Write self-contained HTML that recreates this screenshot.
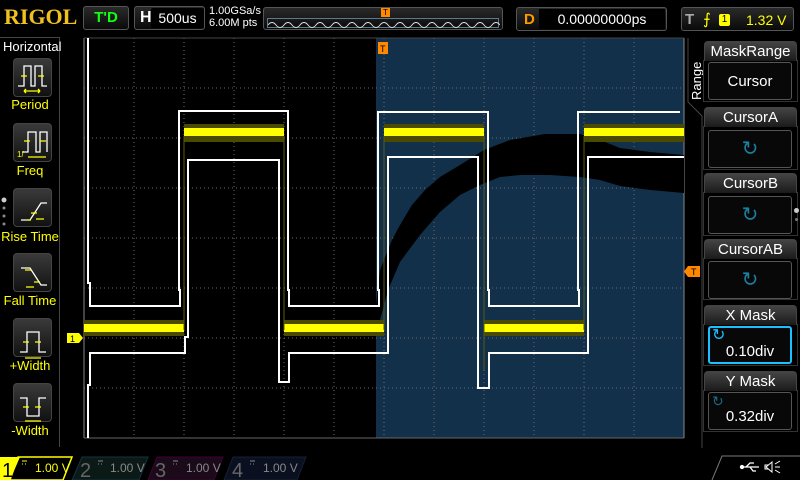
<!DOCTYPE html>
<html><head><meta charset="utf-8"><style>
*{margin:0;padding:0;box-sizing:border-box}
body{width:800px;height:480px;background:#000;position:relative;overflow:hidden;font-family:"Liberation Sans",sans-serif;color:#fff}
.a{position:absolute}
.box{position:absolute;border:1px solid #555;border-radius:3px;background:linear-gradient(#2a2a2a,#0a0a0a)}
.lb{position:absolute;color:#ff0;font-size:13px;text-align:center;width:60px;left:0}
.btn{position:absolute;left:13px;width:39px;height:39px;border:1px solid #444;border-radius:4px;background:linear-gradient(#3a3a3a,#111)}
.rh{position:absolute;left:704px;width:93px;height:20px;border:1px solid #444;border-bottom:none;border-radius:4px 4px 0 0;background:linear-gradient(#444,#1a1a1a);font-size:15px;text-align:center;line-height:19px}
.rb{position:absolute;left:708px;width:84px;height:38px;border:1px solid #555;border-radius:3px;background:#080808;font-size:15px;text-align:center}
.rw{position:absolute;left:703px;width:95px;border:1px solid #333;border-top:none}
</style></head><body>
<div class="a" style="left:4px;top:4px;font-family:'Liberation Serif',serif;font-weight:bold;font-size:22px;color:#f0c020">RIGOL</div>
<div class="box" style="left:83px;top:6px;width:46px;height:24px;color:#1f1;font-weight:bold;font-size:15px;text-align:center;line-height:22px">T'D</div>
<div class="box" style="left:134px;top:6px;width:71px;height:24px"><span class="a" style="left:5px;top:2px;font-weight:bold;font-size:16px">H</span><div class="a" style="left:16px;top:1px;width:53px;height:20px;background:#000;border-radius:2px;font-size:14px;text-align:center;line-height:20px">500us</div></div>
<div class="a" style="left:209px;top:5px;font-size:11px;line-height:12px">1.00GSa/s<br>6.00M pts</div>
<div class="box" style="left:263px;top:7px;width:240px;height:23px"><div class="a" style="left:3px;top:10px;width:232px;height:10px;border:1px solid #5a7a90"></div>
<svg class="a" style="left:4px;top:11px" width="232" height="9"><path d="M0 6 q4 -5 8 0 t8 0 t8 0 t8 0 t8 0 t8 0 t8 0 t8 0 t8 0 t8 0 t8 0 t8 0 t8 0 t8 0 t8 0 t8 0 t8 0 t8 0 t8 0 t8 0 t8 0 t8 0 t8 0 t8 0 t8 0 t8 0 t8 0 t8 0 t8 0" stroke="#ddd" fill="none"/></svg>
<div class="a" style="left:117px;top:0px;width:9px;height:9px;background:#f80;color:#000;font-size:8px;text-align:center;line-height:9px">T</div></div>
<div class="box" style="left:516px;top:7px;width:151px;height:24px"><span class="a" style="left:7px;top:3px;color:#f90;font-weight:bold;font-size:15px">D</span><div class="a" style="left:22px;top:1px;width:126px;height:20px;background:#000;font-size:14px;text-align:center;line-height:20px">0.00000000ps</div></div>
<div class="box" style="left:681px;top:7px;width:113px;height:24px"><span class="a" style="left:3px;top:3px;color:#aaa;font-weight:bold;font-size:15px">T</span><span class="a" style="left:21px;top:2px;color:#ff0;font-size:15px">⨍</span><div class="a" style="left:37px;top:6px;width:11px;height:12px;background:#ff0;color:#000;font-size:10px;text-align:center;border-radius:2px;line-height:12px">1</div><span class="a" style="left:64px;top:4px;color:#ff0;font-size:14px">1.32 V</span></div>

<div class="a" style="left:0;top:37px;width:60px;height:410px;border-right:1px solid #444;border-top:1px solid #444"></div>
<div class="a" style="left:3px;top:39px;font-size:13px">Horizontal</div>
<div class="btn" style="top:58px"></div><div class="lb" style="top:97px">Period</div>
<div class="btn" style="top:123px"></div><div class="lb" style="top:163px">Freq</div>
<div class="btn" style="top:188px"></div><div class="lb" style="top:229px">Rise Time</div>
<div class="btn" style="top:253px"></div><div class="lb" style="top:293px">Fall Time</div>
<div class="btn" style="top:318px"></div><div class="lb" style="top:358px">+Width</div>
<div class="btn" style="top:383px"></div><div class="lb" style="top:423px">-Width</div>
<svg class="a" style="left:0;top:0" width="60" height="440" fill="none" stroke-width="1.3">
<g stroke="#fff"><path d="M18 86h6V66h7v20h4V66h7v20h5"/><path d="M22 152h6V132h8v20h4V132h7v20"/><path d="M21 220h9l11-17h6"/><path d="M21 268h9l11 17h6"/><path d="M20 352h7V332h12v20h7"/><path d="M20 398h7v18h12v-18h7"/></g>
<g stroke="#ff0"><path d="M21 76h6M38 76h6M24 91h16M24 91l2-2M24 91l2 2M40 91l-2-2M40 91l-2 2"/><path d="M24 141h6M40 141h6M28 157h18"/><path d="M31 213h6M27 220h4M36 219h8"/><path d="M25 270h6M34 282h6M26 287h8"/><path d="M23 342h6M35 342h6M25 358h16"/><path d="M23 407h6M35 407h6M25 421h16"/></g>
<text x="17" y="157" fill="#ff0" stroke="none" font-size="8">1/</text>
<g fill="#888" stroke="none"><circle cx="4" cy="200" r="2.5" fill="#ccc"/><circle cx="4" cy="208" r="1.5"/><circle cx="4" cy="216" r="1.5"/><circle cx="4" cy="224" r="1.5"/></g>
</svg>

<svg class="a" style="left:0;top:0" width="800" height="480">
<rect x="376" y="38" width="308" height="400" fill="#12304a"/>
<g stroke="#6a6a6a" stroke-dasharray="1 3">
<path d="M134 38v400M184 38v400M234 38v400M284 38v400M334 38v400M384 38v400M434 38v400M484 38v400M534 38v400M584 38v400M634 38v400"/>
<path d="M84 88h600M84 138h600M84 188h600M84 238h600M84 288h600M84 338h600M84 388h600"/>
</g>
<path d="M84 38v400M684 38v400" stroke="#888"/><path d="M84 438h600" stroke="#666"/><path d="M84 38h600" stroke="#444"/>
<path d="M376 305 L380 270 386 255 392 240 400 225 412 205 425 190 440 177 460 165 484 150 510 140 545 134 580 134 600 140 620 148 650 152 684 155 L684 193 650 190 620 186 600 180 580 177 550 175 520 175 500 177 480 185 460 195 440 212 420 235 400 262 388 290 380 320 376 330Z" fill="#000"/>
<g fill="#4a4a00"><rect x="84" y="320" width="100" height="16"/><rect x="284" y="320" width="100" height="16"/><rect x="484" y="320" width="100" height="16"/><rect x="184" y="124" width="100" height="18"/><rect x="384" y="124" width="100" height="18"/><rect x="584" y="124" width="100" height="18"/></g>
<g fill="#ff0"><rect x="84" y="324" width="100" height="8"/><rect x="284" y="324" width="100" height="8"/><rect x="484" y="324" width="100" height="8"/><rect x="184" y="128" width="100" height="8"/><rect x="384" y="128" width="100" height="8"/><rect x="584" y="128" width="100" height="8"/></g>
<path d="M184 136V330M284 136V330M384 136V330M484 136V370M584 136V330" stroke="#5a5a10" stroke-width="1"/>
<g fill="none" stroke="#fff" stroke-width="2">
<path d="M88 38V283h2V306h90V290h-1V111h109V290h1V306h90V290h-1V112h110V290h1V306h90V290h-1V112h102"/>
<path d="M88 438V385h2V353h95V337h3V160h91V382h10V353h99V157h90V388h11V353h99V157h96"/>
</g>
<rect x="67" y="333" width="12" height="10" fill="#ff0"/><path d="M79 333l4 5-4 5z" fill="#ff0"/><text x="70" y="342" font-size="9" fill="#000">1</text>
<rect x="378" y="42" width="10" height="12" fill="#f80"/><text x="380" y="52" font-size="9" fill="#000">T</text>
<rect x="688" y="266" width="12" height="11" fill="#f80"/><path d="M688 266l-4 5.5 4 5.5z" fill="#f80"/><text x="691" y="275" font-size="9" fill="#000">T</text>
</svg>

<svg class="a" style="left:686px;top:38px" width="20" height="410"><path d="M2 0V64L16 78V410" stroke="#444" fill="none"/><text transform="translate(15 62) rotate(-90)" font-size="13" fill="#fff" font-family="Liberation Sans">Range</text></svg>
<div class="rh" style="top:41px">MaskRange</div><div class="rw" style="top:60px;height:42px"></div><div class="rb" style="top:62px;line-height:38px">Cursor</div>
<div class="rh" style="top:107px">CursorA</div><div class="rw" style="top:126px;height:44px"></div><div class="rb" style="top:130px;color:#1a7fa0;font-size:20px;line-height:36px">↻</div>
<div class="rh" style="top:173px">CursorB</div><div class="rw" style="top:192px;height:44px"></div><div class="rb" style="top:196px;color:#1a7fa0;font-size:20px;line-height:36px">↻</div>
<div class="rh" style="top:239px">CursorAB</div><div class="rw" style="top:258px;height:42px"></div><div class="rb" style="top:261px;color:#1a7fa0;font-size:20px;line-height:36px">↻</div>
<div class="rh" style="top:305px">X Mask</div><div class="rw" style="top:324px;height:42px"></div><div class="rb" style="top:326px;border-color:#1ac0ff;border-width:2px;padding-top:14px;line-height:20px">0.10div<span class="a" style="left:2px;top:-2px;color:#1ac0ff;font-size:16px">↻</span></div>
<div class="rh" style="top:371px">Y Mask</div><div class="rw" style="top:390px;height:42px"></div><div class="rb" style="top:392px;padding-top:14px;line-height:20px">0.32div<span class="a" style="left:3px;top:-2px;color:#1a6a88;font-size:14px">↻</span></div>
<div class="a" style="left:794px;top:208px;width:5px;height:5px;border-radius:50%;background:#ccc"></div><div class="a" style="left:795px;top:218px;width:3px;height:3px;border-radius:50%;background:#777"></div>

<svg class="a" style="left:0;top:454px" width="800" height="26">
<path d="M0 3h72l-9 23H0z" fill="#ff0"/><path d="M18 3h54l-9 23H10z" fill="#000" stroke="#ff0" stroke-width="1.5"/><path d="M0 3h20l-10 23H0z" fill="#ff0"/>
<path d="M82 3h66l-9 23H72z" fill="#0c1a17" stroke="#134"/><path d="M157 3h66l-9 23h-66z" fill="#1a0a1a" stroke="#403"/><path d="M233 3h73l-9 23h-73z" fill="#0a1020" stroke="#123"/>
<g font-size="20" fill="#666"><text x="2" y="23" fill="#000">1</text><text x="80" y="23">2</text><text x="155" y="23">3</text><text x="232" y="23">4</text></g>
<text x="35" y="18" font-size="12" fill="#ff0">1.00 V</text><text x="110" y="18" font-size="12" fill="#888">1.00 V</text><text x="186" y="18" font-size="12" fill="#888">1.00 V</text><text x="263" y="18" font-size="12" fill="#888">1.00 V</text>
<g stroke="#888"><path d="M98 7h5M98 10h1M101 10h1"/><path d="M173 7h5M173 10h1M176 10h1"/><path d="M250 7h5M250 10h1M253 10h1"/></g><path d="M22 7h5M22 10h1M25 10h1" stroke="#ff0"/>
<path d="M712 26l10-24h78" stroke="#777" fill="none"/>
<g stroke="#fff" fill="none" stroke-width="1.3"><path d="M741 13h18M746 13l4-4h4M750 13l3 4h3"/><circle cx="742" cy="13" r="1.5" fill="#fff"/></g>
<path d="M772 8l-6 5 6 5zM768 11h-3v4h3" fill="none" stroke="#fff"/><path d="M775 10l5-3M775 13h5M775 16l5 3" stroke="#fff"/>
</svg>
</body></html>
